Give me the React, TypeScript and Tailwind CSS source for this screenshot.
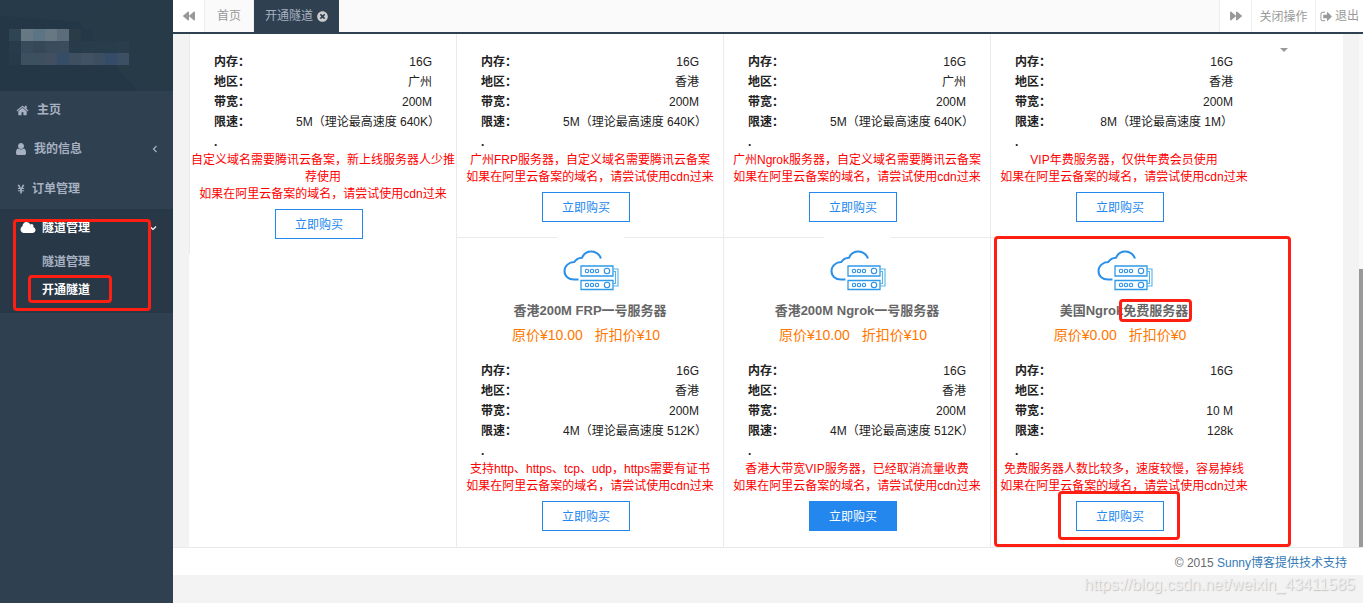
import type { ReactNode } from 'react'
import { FaBackward, FaForward, FaTimesCircle, FaYenSign } from 'react-icons/fa'

type Server = {
  name?: ReactNode
  price?: string
  discount?: string
  memory: string
  region: string
  bandwidth: string
  limit: string
  note: string
  active?: boolean
  marked?: boolean
}

// One list per column, servers stack from top to bottom
const columns: Server[][] = [
  [
    { memory: '16G', region: '广州', bandwidth: '200M', limit: '5M（理论最高速度 640K）', note: '自定义域名需要腾讯云备案，新上线服务器人少推荐使用' },
  ],
  [
    { memory: '16G', region: '香港', bandwidth: '200M', limit: '5M（理论最高速度 640K）', note: '广州FRP服务器，自定义域名需要腾讯云备案' },
    { name: '香港200M FRP一号服务器', price: '10.00', discount: '10', memory: '16G', region: '香港', bandwidth: '200M', limit: '4M（理论最高速度 512K）', note: '支持http、https、tcp、udp，https需要有证书' },
  ],
  [
    { memory: '16G', region: '广州', bandwidth: '200M', limit: '5M（理论最高速度 640K）', note: '广州Ngrok服务器，自定义域名需要腾讯云备案' },
    { name: '香港200M Ngrok一号服务器', price: '10.00', discount: '10', memory: '16G', region: '香港', bandwidth: '200M', limit: '4M（理论最高速度 512K）', note: '香港大带宽VIP服务器，已经取消流量收费', active: true },
  ],
  [
    { memory: '16G', region: '香港', bandwidth: '200M', limit: '8M（理论最高速度 1M）', note: 'VIP年费服务器，仅供年费会员使用' },
    {
      name: (
        <>
          美国Ngrok
          <span className="relative">
            免费服务器
            <Mark className="-inset-x-1 -inset-y-1" />
          </span>
        </>
      ),
      price: '0.00', discount: '0', memory: '16G', region: '', bandwidth: '10 M', limit: '128k', note: '免费服务器人数比较多，速度较慢，容易掉线', marked: true,
    },
  ],
]

function Mark({ className }: { className: string }) {
  return <span aria-hidden className={`pointer-events-none absolute z-10 rounded-[4px] border-3 border-[#ff1e12] ${className}`} />
}

function Glyph({ d, wide = false, className }: { d: string; wide?: boolean; className?: string }) {
  return (
    <svg viewBox={wide ? '0 0 2048 1792' : '0 0 1792 1792'} fill="currentColor" className={className} aria-hidden>
      <path d={d} />
    </svg>
  )
}

const HOME = 'M1472 992v480q0 26-19 45t-45 19h-384v-384h-256v384h-384q-26 0-45-19t-19-45v-480q0-1 .5-3t.5-3l575-474 575 474q1 2 1 6zm223-69l-62 74q-8 9-21 11h-3q-13 0-21-7l-692-577-692 577q-12 8-24 7-13-2-21-11l-62-74q-8-10-7-23.5t11-21.5l719-599q32-26 76-26t76 26l244 204v-195q0-14 9-23t23-9h192q14 0 23 9t9 23v408l219 182q10 8 11 21.5t-7 23.5z'
const USER = 'M1536 1399q0 109-62.5 187t-150.5 78h-854q-88 0-150.5-78t-62.5-187q0-85 8.5-160.5t31.5-152 58.5-131 94-89 134.5-34.5q131 128 313 128t313-128q76 0 134.5 34.5t94 89 58.5 131 31.5 152 8.5 160.5zm-256-887q0 159-112.5 271.5t-271.5 112.5-271.5-112.5-112.5-271.5 112.5-271.5 271.5-112.5 271.5 112.5 112.5 271.5z'
const CLOUD = 'M1984 1152q0 159-112.5 271.5t-271.5 112.5h-1088q-185 0-316.5-131.5t-131.5-316.5q0-132 71-241.5t187-163.5q-2-28-2-43 0-212 150-362t362-150q158 0 286.5 88t187.5 230q70-62 166-62 106 0 181 75t75 181q0 75-41 138 129 30 213 134.5t84 239.5z'
const SIGN_OUT = 'M704 1440q0 4 1 20t.5 26.5-3 23.5-10 19.5-20.5 6.5h-320q-119 0-203.5-84.5t-84.5-203.5v-704q0-119 84.5-203.5t203.5-84.5h320q13 0 22.5 9.5t9.5 22.5q0 4 1 20t.5 26.5-3 23.5-10 19.5-20.5 6.5h-320q-66 0-113 47t-47 113v704q0 66 47 113t113 47h312l11.5 1 11.5 3 8 5.5 7 9 2 13.5zm928-544q0 26-19 45l-544 544q-19 19-45 19t-45-19-19-45v-288h-448q-26 0-45-19t-19-45v-384q0-26 19-45t45-19h448v-288q0-26 19-45t45-19 45 19l544 544q19 19 19 45z'

function Chevron({ d }: { d: string }) {
  return (
    <svg width="8" height="8" viewBox="0 0 8 8" fill="none" stroke="currentColor" strokeWidth="1.2" className="ml-auto" aria-hidden>
      <path d={d} />
    </svg>
  )
}

function ServerIcon() {
  return (
    <svg width="58" height="42" viewBox="0 0 58 42" fill="none" stroke="#2b90e8" className="ml-1" aria-hidden>
      <path d="M38 8.500C36 3.500 32 1.500 28 1.500c-4.500 0-7.500 2.800-9 6.300-3.500.2-6 1.700-7.700 4.200C6 12 1.500 16 1.500 21c0 5.200 4 8.500 9.500 8.500h4.500" strokeWidth="2" />
      <path d="M18 16h32v10H18zM18 30.500h32v9H18z" strokeWidth="1.300" stroke="#2f9ae8" />
      <path d="M50 19h5v17h-5M50 21.500h2.500v12H50" strokeWidth="1.100" stroke="#55b3ec" />
      <g strokeWidth="1.100">
        <circle cx="24" cy="21" r="1.700" /><circle cx="29" cy="21" r="1.700" /><circle cx="34" cy="21" r="1.700" /><circle cx="44" cy="21" r="2.700" />
        <circle cx="24" cy="35" r="1.700" /><circle cx="29" cy="35" r="1.700" /><circle cx="34" cy="35" r="1.700" /><circle cx="44" cy="35" r="2.700" />
      </g>
    </svg>
  )
}

function Row({ label, value }: { label: string; value: string }) {
  return (
    <div className="flex justify-between">
      <dt className="font-bold">{label}：</dt>
      <dd className="w-[136px] text-right whitespace-nowrap">{value}</dd>
    </div>
  )
}

function ServerCard({ server }: { server: Server }) {
  return (
    <article className={`relative flex flex-col border-l border-[#ebebeb] ${server.name ? 'border-t pb-4' : 'pt-[18px] pb-[15px]'}`}>
      {server.marked && <Mark className="-top-0.5 -right-[34px] bottom-0 left-[3px]" />}
      {server.name && (
        <header className="flex flex-col items-center">
          <div className="-mt-px flex w-[67px] justify-center bg-white pt-[13px]">
            <ServerIcon />
          </div>
          <h2 className="mt-[9px] text-[13px] leading-5 font-bold text-[#666]">{server.name}</h2>
          <p className="mt-1 mr-2 flex gap-3 text-sm leading-5 text-[#ff7800]">
            <span>原价¥{server.price}</span>
            <span>折扣价¥{server.discount}</span>
          </p>
        </header>
      )}
      <dl className={`px-6 leading-5 text-[#222] ${server.name ? 'mt-4' : ''}`}>
        <Row label="内存" value={server.memory} />
        <Row label="地区" value={server.region} />
        <Row label="带宽" value={server.bandwidth} />
        <Row label="限速" value={server.limit} />
      </dl>
      <p className="px-6 leading-5 font-bold text-[#222]">.</p>
      <p className="text-center leading-[17px] text-[#f00]">
        {server.note}
        <br />
        如果在阿里云备案的域名，请尝试使用cdn过来
      </p>
      <div className="relative mt-1.5 mr-2 self-center">
        <button
          type="button"
          className={`block h-[30px] w-[88px] border border-[#2387ee] pt-px ${server.active ? 'bg-[#2387ee] text-white' : 'bg-white text-[#2387ee]'}`}
        >
          立即购买
        </button>
        {server.marked && <Mark className="-top-2.5 -right-4 -bottom-[9px] -left-[18px]" />}
      </div>
    </article>
  )
}

// [column, row, colour] of every tile over the profile name
const tiles: [number, number, string][] = [
  [0, 0, '#2f4454'], [1, 0, '#667883'], [2, 0, '#5d7485'], [3, 0, '#687882'], [4, 0, '#5c6c7b'], [5, 0, '#2a3d46'], [6, 0, '#253848'],
  [0, 1, '#273b4c'], [1, 1, '#364b5b'], [2, 1, '#344858'], [3, 1, '#384c5c'], [4, 1, '#3b4c5c'], [5, 1, '#273b4a'], [6, 1, '#283c4b'], [7, 1, '#283c4b'], [8, 1, '#273c4d'], [9, 1, '#293d4d'],
  [0, 2, '#273a4a'], [1, 2, '#3c5062'], [2, 2, '#3d5061'], [3, 2, '#414f61'], [4, 2, '#364d67'], [5, 2, '#3d4f61'], [6, 2, '#425264'], [7, 2, '#3b4f60'], [8, 2, '#344c67'], [9, 2, '#3d4f62'],
]

function Profile() {
  return (
    <svg viewBox="0 0 173 91" className="block h-[91px] w-full bg-[#243746]" preserveAspectRatio="xMinYMin slice" aria-hidden>
      <path d="M0 0h100L80 22 0 16z" fill="#273a49" />
      <path d="M100 0h73v91h-35L119 70 78 22z" fill="#273a48" />
      {tiles.map(([x, y, fill]) => (
        <rect key={`${x}-${y}`} x={9 + x * 12} y={29 + y * 12} width="12" height="12" fill={fill} shapeRendering="crispEdges" />
      ))}
    </svg>
  )
}

function Sidebar() {
  return (
    <aside className="w-[173px] shrink-0 bg-[#2f4050] font-bold text-[#a7b1c2]">
      <Profile />
      <nav>
        <a href="#home" className="flex h-[38px] items-center px-4">
          <Glyph d={HOME} className="mr-2 h-[13px] w-[13px]" />
          主页
        </a>
        <a href="#me" className="flex h-10 items-center px-3.5">
          <Glyph d={USER} className="mr-1.5 h-3.5 w-3.5" />
          我的信息
          <Chevron d="M5.500 1L2.500 4l3 3" />
        </a>
        <a href="#orders" className="flex h-10 items-center px-4">
          <FaYenSign className="mr-1.5 h-2.5 w-2.5" />
          订单管理
        </a>
        <div className="relative bg-[#293846] pb-2.5">
          <a href="#tunnels" className="flex h-[38px] items-center pr-4 pl-5 text-white">
            <Glyph d={CLOUD} wide className="mr-1.5 h-3.5 w-4" />
            隧道管理
            <Chevron d="M1 2.500l3 3 3-3" />
          </a>
          <a href="#list" className="flex h-7 items-center pt-0.5 pl-[42px]">隧道管理</a>
          <a href="#open" className="relative flex h-7 items-center pt-0.5 pl-[42px] text-white">
            开通隧道
            <Mark className="inset-y-0 left-7 w-[84px]" />
          </a>
          <Mark className="top-2.5 bottom-0.5 left-[13px] w-[138px]" />
        </div>
      </nav>
    </aside>
  )
}

function TabBar() {
  return (
    <header className="flex h-[34px] border-b-2 border-[#2f4050] bg-[#fafafa] text-[#999]">
      <button type="button" aria-label="向左" className="flex w-8 items-center justify-center border-r border-[#eee] bg-white">
        <FaBackward className="h-3 w-3" />
      </button>
      <a href="#home" className="flex w-[49px] items-center justify-center border-r border-[#eee]">首页</a>
      <a href="#open" className="flex w-[85px] items-center justify-center gap-1 bg-[#2f4050] text-[#a7b1c2]">
        开通隧道
        <FaTimesCircle className="h-[11px] w-[11px] text-[#ccc]" />
      </a>
      <div className="ml-auto flex bg-white">
        <button type="button" aria-label="向右" className="flex w-8 items-center justify-center border-l border-[#eee]">
          <FaForward className="h-3 w-3" />
        </button>
        <button type="button" className="relative w-16 border-l border-[#eee] pt-px">
          关闭操作
          <span className="absolute top-12 left-7 z-10 border-x-4 border-t-4 border-x-transparent border-t-[#999]" />
        </button>
        <a href="#logout" className="flex w-12 items-center justify-center gap-0.5 border-l border-[#eee]">
          <Glyph d={SIGN_OUT} className="h-[13px] w-[13px]" />
          退出
        </a>
      </div>
    </header>
  )
}

export default function App() {
  return (
    <div className="flex min-h-screen bg-[#f3f3f4] font-['Liberation_Sans','Noto_Sans_CJK_SC',sans-serif] text-xs">
      <Sidebar />
      <div className="relative min-w-0 flex-1">
        <TabBar />
        <main className="relative pr-5 pl-4">
          <div className="grid grid-cols-4 bg-white pr-[86px]">
            {columns.map((servers, i) => (
              <div key={i}>
                {servers.map((server, j) => (
                  <ServerCard key={j} server={server} />
                ))}
              </div>
            ))}
          </div>
          {/* scrollbar */}
          <div className="absolute inset-y-0 right-0 flex w-1 flex-col justify-end bg-[#f8f8f8]">
            <div className="h-[278px] bg-[#999]" />
          </div>
        </main>
        <footer className="flex h-7 items-center justify-end border-t border-[#e7eaec] bg-white px-4 pt-0.5 text-[#676a6c]">
          © 2015&nbsp;<a href="#blog" className="text-[#337ab7]">Sunny博客提供技术支持</a>
        </footer>
        <p className="absolute right-2 bottom-1.5 text-base leading-6 text-[#f0f0f0] [text-shadow:1px_1px_1px_#c4c4c4]">
          https://blog.csdn.net/weixin_43411585
        </p>
      </div>
    </div>
  )
}
